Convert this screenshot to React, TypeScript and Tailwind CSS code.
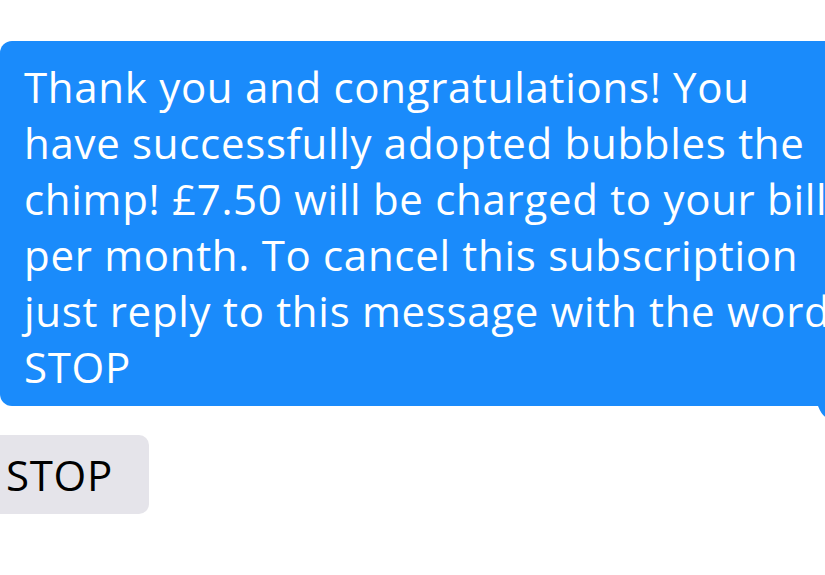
import React from 'react';

const lines = [
  'Thank you and congratulations! You',
  'have successfully adopted bubbles the',
  'chimp! £7.50 will be charged to your bill',
  'per month. To cancel this subscription',
  'just reply to this message with the word',
  'STOP',
];

const App = () => {
  return (
    <div
      className="w-full h-screen overflow-hidden bg-white [font-variant-ligatures:none]"
      style={{ fontFamily: '"Open Sans", Lato, sans-serif' }}
    >
      <div className="pt-[41px]">
        {/* incoming message, wider than the screen on purpose */}
        <div className="relative w-[850px]">
          <div className="rounded-[12px] bg-[#1a8bfb] text-white text-[42px] tracking-[0.7px] leading-[56px] pl-[24px] pt-[18px] h-[365px]">
            {lines.map((line, i) => (
              <div key={i} className="whitespace-nowrap">{line}</div>
            ))}
          </div>
          {/* little tail at the bottom right */}
          <svg className="absolute left-[815px] top-[355px]" width="12" height="24" viewBox="0 0 12 24">
            <path d="M0 0 L12 0 L12 22 Q7 20 3 10 L0 10 Z" fill="#1a8bfb" />
          </svg>
        </div>

        <div className="mt-[29px] -ml-[20px] w-[169px] h-[79px] rounded-[10px] bg-[#e5e4ea] flex items-center pl-[26px] text-[42px] tracking-[0.7px] text-black">
          STOP
        </div>
      </div>
    </div>
  );
};

export default App;
